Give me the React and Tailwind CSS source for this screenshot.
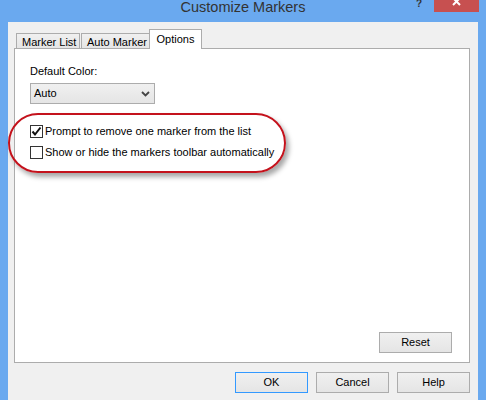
import React from "react";

const font = { fontFamily: '"Liberation Sans", Arial, sans-serif' };

function Button({ label, primary }) {
  return (
    <button
      className={`w-[73px] h-[21px] flex items-center justify-center text-[11px] leading-[15px] text-black bg-gradient-to-b from-[#f0f0f0] to-[#e5e5e5] border ${
        primary ? "border-[#3399ff]" : "border-[#acacac]"
      }`}
    >
      {label}
    </button>
  );
}

function Checkbox({ checked, label }) {
  return (
    <label className="flex items-center h-[15px] gap-[2px] text-[11px] leading-[15px] text-black whitespace-nowrap">
      <span className="w-[13px] h-[13px] border border-[#333] bg-white flex items-center justify-center">
        {checked && (
          <svg width="11" height="11" viewBox="0 0 11 11">
            <path d="M1.5 5.5 L4 8.5 L9.5 1.5" fill="none" stroke="#111" strokeWidth="2" />
          </svg>
        )}
      </span>
      {label}
    </label>
  );
}

export default function App() {
  return (
    <div className="w-[486px] h-[400px] overflow-hidden bg-[#6aa9ef] flex flex-col" style={font}>
      {/* title bar */}
      <div className="h-[22px] grid grid-cols-[1fr_auto_1fr] overflow-hidden">
        <div />
        <div className="text-[14.5px] leading-[15px] text-[#333]">Customize Markers</div>
        <div className="flex justify-end items-start pr-[7px]">
          <span className="-mt-[1px] mr-[12px] text-[10px] font-bold text-[#333] leading-[10px]">?</span>
          <div className="w-[45px] h-[12px] bg-[#c75050] flex justify-center items-start overflow-hidden">
            <svg width="9" height="9" viewBox="0 0 9 9" className="-mt-[3px]">
              <path d="M1 1 L8 8 M8 1 L1 8" stroke="#fff" strokeWidth="2" />
            </svg>
          </div>
        </div>
      </div>

      {/* client area */}
      <div className="flex-1 mx-[8px] bg-[#f0f0f0] pt-[7px] flex flex-col">
        {/* tabs */}
        <div className="relative z-10 h-[19px] flex items-end pl-[8px] text-[11px] leading-[15px] text-black whitespace-nowrap">
          <div className="w-[64px] h-[15px] border border-b-0 border-[#acacac] bg-gradient-to-b from-[#f0f0f0] to-[#e5e5e5] flex items-center pl-[5px] pt-[2px]">
            Marker List
          </div>
          <div className="ml-[1px] w-[69px] h-[15px] border border-b-0 border-[#acacac] bg-gradient-to-b from-[#f0f0f0] to-[#e5e5e5] flex items-center pl-[5px] pt-[2px]">
            Auto Marker
          </div>
          <div className="-ml-[1px] -mb-px w-[53px] h-[20px] border border-b-0 border-[#acacac] bg-white flex justify-center pt-[2px]">
            Options
          </div>
        </div>

        {/* panel */}
        <div className="ml-[6px] mr-[8px] h-[315px] border border-[#acacac] bg-white flex flex-col pt-[15px] pl-[15px]">
          <div className="text-[11px] leading-[15px] text-black">Default Color:</div>
          <div className="mt-[4px] w-[125px] h-[21px] border border-[#acacac] bg-gradient-to-b from-[#f0f0f0] to-[#e5e5e5] flex items-center justify-between pl-[3px] pr-[4px] text-[11px] leading-[15px] text-black">
            <span>Auto</span>
            <svg width="9" height="6" viewBox="0 0 9 6">
              <path d="M1 1 L4.5 4.5 L8 1" fill="none" stroke="#444" strokeWidth="1.8" />
            </svg>
          </div>

          <div className="mt-[9px] -ml-[22px] w-[278px] h-[60px] border-2 border-[#c4121c] rounded-[30px] shadow-[3px_4px_5px_rgba(0,0,0,0.35)] pt-[9px] pl-[20px] flex flex-col gap-[6px]">
            <Checkbox checked label="Prompt to remove one marker from the list" />
            <Checkbox label="Show or hide the markers toolbar automatically" />
          </div>

          <div className="mt-auto mb-[9px] mr-[17px] flex justify-end">
            <Button label="Reset" />
          </div>
        </div>

        {/* dialog buttons */}
        <div className="mt-[9px] pr-[8px] flex justify-end gap-[8px]">
          <Button label="OK" primary />
          <Button label="Cancel" />
          <Button label="Help" />
        </div>
      </div>
    </div>
  );
}
